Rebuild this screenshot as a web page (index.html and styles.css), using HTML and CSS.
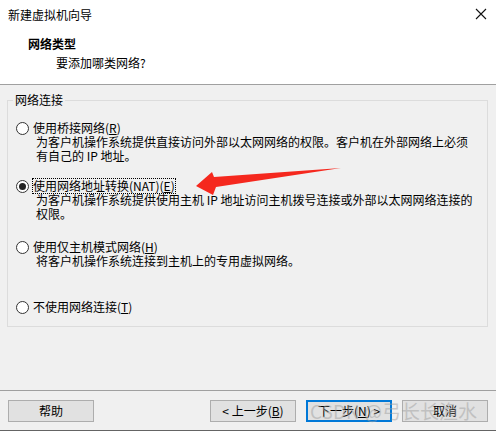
FILE: index.html
```html
<!DOCTYPE html>
<html lang="zh-CN">
<head>
    <meta charset="UTF-8">
    <title>新建虚拟机向导</title>
    <link rel="stylesheet" href="styles.css">
</head>
<body>
    <div class="wizard">
        <div class="header">
            <div class="titlebar">
                <span class="title">新建虚拟机向导</span>
                <svg class="close" width="12" height="12" viewBox="0 0 12 12">
                    <path d="M1 1 L11 11 M11 1 L1 11" stroke="#111" stroke-width="1.1" fill="none"/>
                </svg>
            </div>
            <div class="page-title">网络类型</div>
            <div class="page-sub">要添加哪类网络?</div>
        </div>

        <div class="content">
            <fieldset class="group">
                <legend>网络连接</legend>

                <div class="option opt-bridge">
                    <div class="option-row">
                        <span class="radio"></span>
                        <span class="label">使用桥接网络(<u>R</u>)</span>
                    </div>
                    <div class="desc">为客户机操作系统提供直接访问外部以太网网络的权限。客户机在外部网络上必须<br>有自己的 IP 地址。</div>
                </div>

                <div class="option opt-nat">
                    <div class="option-row">
                        <span class="radio checked"></span>
                        <span class="label focused">使用网络地址转换(NAT)(<u>E</u>)</span>
                    </div>
                    <div class="desc">为客户机操作系统提供使用主机 IP 地址访问主机拨号连接或外部以太网网络连接的<br>权限。</div>
                </div>

                <div class="option opt-host">
                    <div class="option-row">
                        <span class="radio"></span>
                        <span class="label">使用仅主机模式网络(<u>H</u>)</span>
                    </div>
                    <div class="desc">将客户机操作系统连接到主机上的专用虚拟网络。</div>
                </div>

                <div class="option">
                    <div class="option-row">
                        <span class="radio"></span>
                        <span class="label">不使用网络连接(<u>T</u>)</span>
                    </div>
                </div>
            </fieldset>
        </div>

        <div class="footer">
            <button class="btn">帮助</button>
            <div class="nav-buttons">
                <button class="btn">&lt; 上一步(<u>B</u>)</button>
                <button class="btn primary">下一步(<u>N</u>) &gt;</button>
                <button class="btn">取消</button>
            </div>
        </div>

        <!-- annotation drawn on top of the screenshot -->
        <svg class="arrow" width="496" height="431" viewBox="0 0 496 431">
            <polygon points="196,186 212,172 214,177 341,168 216,187 213,195" fill="#f5281e"/>
        </svg>
        <div class="watermark">CSDN @弓长长渔水</div>
    </div>
</body>
</html>
```

FILE: styles.css
```css
body {
    margin: 0;
    font-family: "Noto Sans CJK SC", "Noto Sans", sans-serif;
    font-size: 12px;
    color: #000;
    background-color: #f0f0f0;
}

.wizard {
    position: relative;
    width: 496px;
    height: 431px;
    display: flex;
    flex-direction: column;
    overflow: hidden;
}

.header {
    background-color: #ffffff;
    height: 85px;
    border-bottom: 1px solid #a0a0a0;
    box-sizing: border-box;
}

.titlebar {
    display: flex;
    justify-content: space-between;
    align-items: center;
    height: 28px;
    padding: 0 9px 0 8px;
}

.title {
    font-size: 12px;
    color: #000;
}

.page-title {
    font-weight: bold;
    font-size: 12px;
    line-height: 16px;
    padding-left: 28px;
    margin-top: 8px;
}

.page-sub {
    line-height: 16px;
    padding-left: 56px;
    margin-top: 3px;
}

.content {
    flex: 1;
    padding: 8px 8px 0 7px;
}

.group {
    margin: 0;
    padding: 14px 8px 0 8px;
    border: 1px solid #dcdcdc;
    height: 234px;
    box-sizing: border-box;
}

.group legend {
    padding: 0 2px;
    margin-left: -3px;
    line-height: 14px;
}

.option {
    line-height: 14px;
}

.opt-bridge {
    margin-bottom: 16px;
}

.opt-nat {
    margin-bottom: 19px;
}

.opt-host {
    margin-bottom: 32px;
}

.option-row {
    display: flex;
    align-items: center;
    gap: 4px;
}

.radio {
    width: 11px;
    height: 11px;
    border: 1px solid #333;
    border-radius: 50%;
    background-color: #fff;
    display: flex;
    align-items: center;
    justify-content: center;
}

.radio.checked::after {
    content: "";
    width: 7px;
    height: 7px;
    border-radius: 50%;
    background-color: #222;
}

.label.focused {
    outline: 1px dotted #000;
}

.desc {
    padding-left: 20px;
}

.footer {
    height: 41px;
    border-top: 1px solid #a0a0a0;
    border-bottom: 1px solid #646464;
    box-sizing: border-box;
    display: flex;
    justify-content: space-between;
    align-items: center;
    padding: 0 8px 0 8px;
}

.nav-buttons {
    display: flex;
    gap: 10px;
}

.btn {
    width: 86px;
    height: 22px;
    background-color: #e1e1e1;
    border: 1px solid #adadad;
    font-family: inherit;
    font-size: 12px;
    color: #000;
    padding: 0;
}

.btn.primary {
    border: 2px solid #0078d7;
}

.arrow {
    position: absolute;
    top: 0;
    left: 0;
    pointer-events: none;
}

.watermark {
    position: absolute;
    left: 310px;
    top: 400px;
    font-size: 19px;
    line-height: 22px;
    color: rgba(160, 160, 160, 0.5);
    pointer-events: none;
}
```
